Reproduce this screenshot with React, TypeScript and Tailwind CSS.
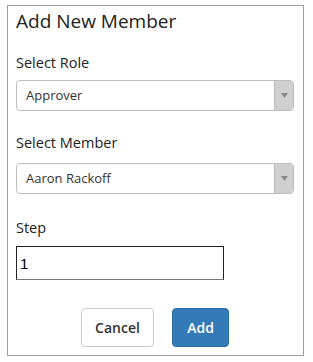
import React from 'react';

function SelectBox({ value }: { value: string }) {
    return (
        <div className="flex h-[31px] w-[278px] rounded-[4px] border border-[#bdbdbd] bg-white overflow-hidden">
            <div className="flex-1 flex items-center pl-[9px] text-[13px] text-[#333]">{value}</div>
            <div className="w-[19px] flex items-center justify-center bg-[#cfcfcf] border-l border-[#bdbdbd]">
                <svg width="7" height="5" viewBox="0 0 7 5">
                    <path d="M0 0 L7 0 L3.5 5 Z" fill="#8a8a8a" />
                </svg>
            </div>
        </div>
    );
}

export default function App() {
    return (
        <div className="w-[313px] h-[362px] bg-white pt-[5px] pl-[7px]" style={{ fontFamily: '"Open Sans", sans-serif' }}>
            <div className="w-[297px] h-[351px] border border-[#a0a0a0] pl-[8px] flex flex-col">
                <h2 className="text-[19px] leading-[26px] text-[#222] mt-[2px]">Add New Member</h2>

                <label className="text-[14.5px] text-[#222] mt-[19px] leading-[20px]">Select Role</label>
                <div className="mt-[7px]">
                    <SelectBox value="Approver" />
                </div>

                <label className="text-[14.5px] text-[#222] mt-[22px] leading-[20px]">Select Member</label>
                <div className="mt-[10px]">
                    <SelectBox value="Aaron Rackoff" />
                </div>

                <label className="text-[14.5px] text-[#222] mt-[24px] leading-[20px]">Step</label>
                <input
                    defaultValue="1"
                    className="mt-[8px] w-[208px] h-[34px] border border-[#222] border-b-[#777] px-[3px] text-[15px] text-black outline-none"
                    style={{ fontFamily: '"Liberation Sans", Arial, sans-serif' }}
                />

                <div className="flex justify-center gap-[18px] mt-[28px] pr-[9px]">
                    <button className="w-[73px] h-[39px] rounded-[4px] border border-[#ccc] bg-white text-[14px] font-semibold text-[#333]">
                        Cancel
                    </button>
                    <button className="w-[57px] h-[39px] rounded-[4px] border border-[#2e6da4] bg-[#337ab7] text-[14px] font-semibold text-white">
                        Add
                    </button>
                </div>
            </div>
        </div>
    );
}
